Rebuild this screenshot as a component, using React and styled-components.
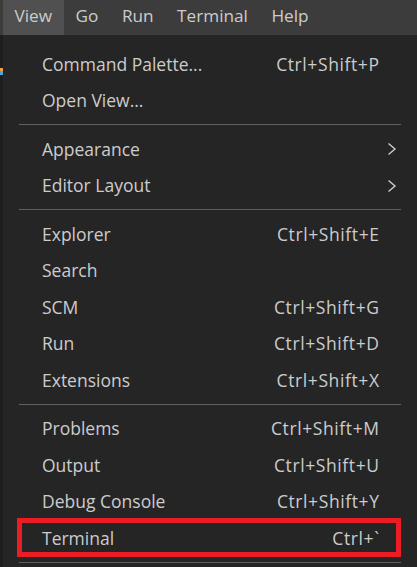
import React from "react";
import styled, { createGlobalStyle } from "styled-components";

const Global = createGlobalStyle`
  html, body { margin: 0; padding: 0; background: #252526; }
  body { font-family: "Open Sans", "Noto Sans", sans-serif; overflow: hidden; }
  * { box-sizing: border-box; }
`;

const Page = styled.div`
  width: 417px;
  height: 567px;
  display: flex;
  flex-direction: column;
  background: #252526;
  overflow: hidden;
`;

const MenuBar = styled.div`
  height: 35px;
  flex: none;
  display: flex;
  align-items: stretch;
  background: #3c3c3c;
  padding-left: 3px;
`;

const BarItem = styled.div`
  display: flex;
  align-items: center;
  padding: 0 12px 4px 11.5px;
  font-size: 17.2px;
  color: #cccccc;
  background: ${(p) => (p.$active ? "#505050" : "transparent")};
`;

const Body = styled.div`
  flex: 1;
  display: flex;
  min-height: 0;
`;

const EditorEdge = styled.div`
  width: 3px;
  flex: none;
  background: #1e1e1e;
  position: relative;
`;

const EdgeMark = styled.div`
  position: absolute;
  left: 0;
  top: 33px;
  width: 3px;
  height: 7px;
  background: linear-gradient(#e8a33d 0 40%, #4fa3e0 40% 100%);
`;

const Menu = styled.div`
  flex: 1;
  background: #252526;
  padding-top: 11px;
  display: flex;
  flex-direction: column;
`;

const Row = styled.div`
  position: relative;
  height: 36.5px;
  flex: none;
  display: flex;
  align-items: center;
  justify-content: space-between;
  padding: 0 ${(p) => (p.$sub ? "20px" : "38px")} 0 39px;
  font-size: 17.5px;
  color: #cccccc;
`;

const Label = styled.span`
  white-space: nowrap;
  padding-bottom: 1px;
`;

const Shortcut = styled.span`
  white-space: nowrap;
  padding-bottom: 1px;
  letter-spacing: 0.6px;
  margin-right: -0.6px;
`;

const Chevron = styled.svg`
  width: 10px;
  height: 14px;
  display: block;
`;

const Separator = styled.div`
  flex: none;
  height: 12px;
  display: flex;
  align-items: flex-start;
  padding: 5px 16px 0 16px;
  &::after {
    content: "";
    display: block;
    width: 100%;
    height: 1px;
    background: #5f5f5f;
  }
`;

const Highlight = styled.div`
  position: absolute;
  left: 14px;
  right: 16px;
  top: -2px;
  bottom: 0;
  border: 5px solid #ec1c24;
  pointer-events: none;
`;

const groups = [
  [
    { label: "Command Palette...", key: "Ctrl+Shift+P" },
    { label: "Open View..." },
  ],
  [
    { label: "Appearance", sub: true },
    { label: "Editor Layout", sub: true },
  ],
  [
    { label: "Explorer", key: "Ctrl+Shift+E" },
    { label: "Search" },
    { label: "SCM", key: "Ctrl+Shift+G" },
    { label: "Run", key: "Ctrl+Shift+D" },
    { label: "Extensions", key: "Ctrl+Shift+X" },
  ],
  [
    { label: "Problems", key: "Ctrl+Shift+M" },
    { label: "Output", key: "Ctrl+Shift+U" },
    { label: "Debug Console", key: "Ctrl+Shift+Y" },
    { label: "Terminal", key: "Ctrl+`", marked: true },
  ],
];

function ChevronIcon() {
  return (
    <Chevron viewBox="0 0 10 14">
      <path d="M1.5 1.5 L8 7 L1.5 12.5" fill="none" stroke="#cccccc" strokeWidth="1.4" />
    </Chevron>
  );
}

export default function App() {
  return (
    <Page>
      <Global />
      <MenuBar>
        <BarItem $active>View</BarItem>
        <BarItem>Go</BarItem>
        <BarItem>Run</BarItem>
        <BarItem>Terminal</BarItem>
        <BarItem>Help</BarItem>
      </MenuBar>
      <Body>
        <EditorEdge>
          <EdgeMark />
        </EditorEdge>
        <Menu>
          {groups.map((g, gi) => (
            <React.Fragment key={gi}>
              {g.map((item) => (
                <Row key={item.label} $sub={item.sub}>
                  <Label>{item.label}</Label>
                  {item.key && <Shortcut>{item.key}</Shortcut>}
                  {item.sub && <ChevronIcon />}
                  {item.marked && <Highlight />}
                </Row>
              ))}
              <Separator />
            </React.Fragment>
          ))}
        </Menu>
      </Body>
    </Page>
  );
}
